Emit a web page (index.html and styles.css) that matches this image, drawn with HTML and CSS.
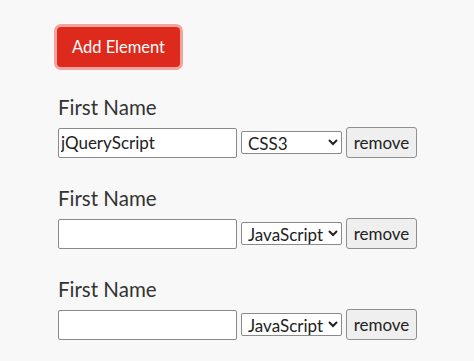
FILE: index.html
```html
<!DOCTYPE html>
<html>
<head>
<meta charset="utf-8">
<link rel="stylesheet" href="styles.css">
</head>
<body>
<div class="wrap">
  <button class="add">Add Element</button>
  <div class="group">
    <label class="lbl">First Name</label>
    <div class="row">
      <input class="txt" type="text" value="jQueryScript">
      <select class="sel sel-css"><option>CSS3</option><option>JavaScript</option></select>
      <button class="rm">remove</button>
    </div>
  </div>
  <div class="group">
    <label class="lbl">First Name</label>
    <div class="row">
      <input class="txt" type="text" value="">
      <select class="sel"><option>JavaScript</option><option>CSS3</option></select>
      <button class="rm">remove</button>
    </div>
  </div>
  <div class="group">
    <label class="lbl">First Name</label>
    <div class="row">
      <input class="txt" type="text" value="">
      <select class="sel"><option>JavaScript</option><option>CSS3</option></select>
      <button class="rm">remove</button>
    </div>
  </div>
</div>
</body>
</html>
```

FILE: styles.css
```css
html, body {
  margin: 0;
  padding: 0;
  background: #f8f8f8;
  font-family: Lato, "Open Sans", sans-serif;
  color: #333;
}
.wrap {
  padding: 27px 0 0 57px;
  display: flex;
  flex-direction: column;
  align-items: flex-start;
}
.add {
  width: 123px;
  height: 40px;
  background: #dd2a1c;
  color: #fff;
  border: none;
  border-radius: 4px;
  box-shadow: 0 0 0 3px #f2a39d;
  font-family: Lato, sans-serif;
  font-size: 16.5px;
  padding: 0;
  margin-bottom: 28px;
}
.group {
  display: flex;
  flex-direction: column;
  margin-bottom: 28px;
}
.lbl {
  font-size: 20.5px;
  line-height: 24px;
  color: #333;
  margin-bottom: 8px;
  margin-left: 1px;
}
.row {
  display: flex;
  align-items: center;
  gap: 4px;
  height: 31px;
  margin-left: 1px;
}
.txt {
  box-sizing: border-box;
  width: 179px;
  height: 30px;
  border: 1px solid #8a8a8a;
  border-radius: 2px;
  background: #fff;
  font-family: Lato, sans-serif;
  font-size: 17px;
  color: #222;
  padding: 0 2px;
  margin: 0;
}
.sel {
  box-sizing: border-box;
  width: 101px;
  height: 23px;
  border: 1px solid #8a8a8a;
  border-radius: 2px;
  background: #fff;
  font-family: Lato, sans-serif;
  font-size: 17px;
  color: #222;
  padding: 0 0 0 2px;
  margin: 0;
}
.rm {
  box-sizing: border-box;
  width: 71px;
  height: 31px;
  border: 1px solid #8f8f8f;
  border-radius: 3px;
  background: #efefef;
  font-family: Lato, sans-serif;
  font-size: 17px;
  color: #222;
  padding: 0;
  margin: 0;
}
```
